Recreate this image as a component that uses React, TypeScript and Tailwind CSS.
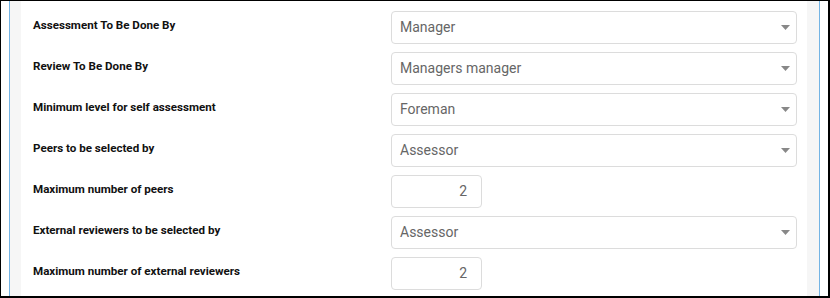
import React from 'react';

interface Field {
  label: string;
  kind: 'select' | 'number';
  value: string;
}

const fields: Field[] = [
  { label: 'Assessment To Be Done By', kind: 'select', value: 'Manager' },
  { label: 'Review To Be Done By', kind: 'select', value: 'Managers manager' },
  { label: 'Minimum level for self assessment', kind: 'select', value: 'Foreman' },
  { label: 'Peers to be selected by', kind: 'select', value: 'Assessor' },
  { label: 'Maximum number of peers', kind: 'number', value: '2' },
  { label: 'External reviewers to be selected by', kind: 'select', value: 'Assessor' },
  { label: 'Maximum number of external reviewers', kind: 'number', value: '2' },
];

function Caret() {
  return (
    <svg width="9" height="5" viewBox="0 0 9 5" className="shrink-0">
      <path d="M0 0 L9 0 L4.5 5 Z" fill="#888888" />
    </svg>
  );
}

export default function App() {
  return (
    <div
      className="w-[830px] h-[298px] flex bg-white border-t border-l border-r-2 border-b-2 border-black overflow-hidden"
      style={{ fontFamily: 'Roboto, "Liberation Sans", sans-serif' }}
    >
      <div className="w-[8px] bg-white" />
      <div className="w-[1px] bg-[#74b4e4]" />
      <div className="w-[11px] bg-[#f6f6f6]" />

      {/* Form */}
      <div className="flex-1 bg-white pt-[10px] pl-[12px] pr-[9px] flex flex-col gap-[8px]">
        {fields.map((f) => (
          <div key={f.label} className="flex items-start h-[33px]">
            <div className="w-[358px] pt-[6px] text-[11.6px] leading-[16px] font-bold text-[#111]">
              {f.label}
            </div>
            {f.kind === 'select' ? (
              <div className="w-[406px] h-[33px] border border-[#dcdcdc] rounded-[4px] flex items-center justify-between pl-[8px] pr-[6px] text-[14px] text-[#666]">
                <span>{f.value}</span>
                <Caret />
              </div>
            ) : (
              <div className="w-[91px] h-[33px] border border-[#dcdcdc] rounded-[4px] flex items-center justify-end pr-[14px] text-[14px] text-[#666]">
                {f.value}
              </div>
            )}
          </div>
        ))}
      </div>

      <div className="w-[12px] bg-[#f6f6f6]" />
      <div className="w-[1px] bg-[#74b4e4]" />
      <div className="w-[8px] bg-white" />
    </div>
  );
}
